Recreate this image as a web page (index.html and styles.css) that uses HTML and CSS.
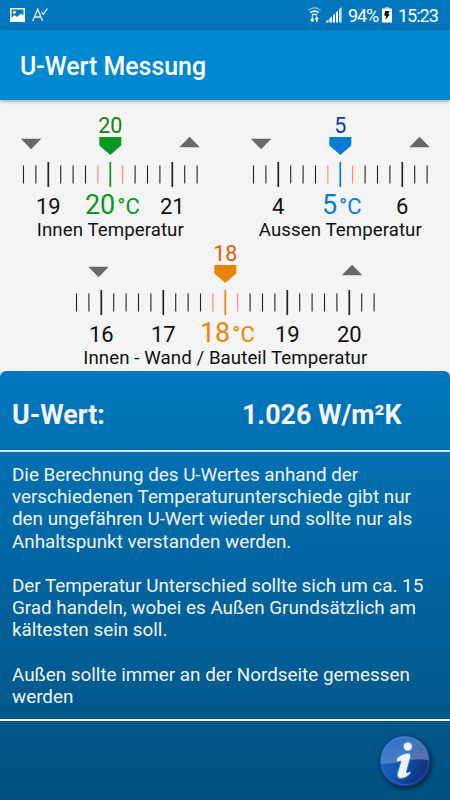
FILE: index.html
```html
<!DOCTYPE html>
<html lang="de">
<head>
    <meta charset="UTF-8">
    <meta name="viewport" content="width=device-width, initial-scale=1.0">
    <title>U-Wert Messung</title>
    <link rel="stylesheet" href="styles.css">
</head>
<body>
    <div class="statusbar">
        <svg class="icon-picture" width="15" height="14" viewBox="0 0 15 14">
            <path fill="#fff" fill-rule="evenodd" d="M0 0h15v14H0zM1.500 1.500v8.500l3-3 2.500 2 4-3.500 2.500 2V1.500z"/>
            <circle cx="4.300" cy="4.300" r="1.500" fill="#fff"/>
        </svg>
        <svg class="icon-spell" width="16" height="14" viewBox="0 0 16 14" fill="none" stroke="#e8f3fa" stroke-width="1.300">
            <path d="M.7 13L5.700 1.200 10.500 13M2.400 9h6.500M9.700 4.200l1.600 2.100L15.300.7"/>
        </svg>
        <div class="status-right">
            <svg width="13" height="16" viewBox="0 0 13 16" fill="none" stroke="#fff" stroke-width="1.400">
                <path d="M.5 3.500Q6.500-1.800 12.500 3.500" stroke="#7fb8dc"/>
                <path d="M2.200 5.800q4.300-3.500 8.600 0M4 8.200q2.500-2 5 0"/>
                <path d="M4.300 9.500v5M8.700 15v-5"/>
                <path fill="#fff" stroke="none" d="M2 12.200h4.600L4.300 15.300zM6.400 12.300H11L8.700 9.300z"/>
            </svg>
            <svg class="icon-signal" width="16" height="16" viewBox="0 0 16 16" fill="#fff">
                <path d="M0 15.500V14.500L2.500 12.500v3zM3.500 11.500L6 9.300v6.200H3.500zM7 8.300L9 6.500v9H7zM10 5.500l2-1.800v11.800h-2z"/>
                <path fill="#c5dff0" d="M13 2.300L15.700 0v15.500H13z"/>
            </svg>
            <span class="percent">94%</span>
            <svg class="icon-battery" width="10" height="16" viewBox="0 0 10 16">
                <path fill="#8fc1e0" d="M3 0h4v2H3z"/>
                <path fill="#fff" d="M0 1.500h10v14H0z"/>
                <path fill="#111" d="M3 4h4.500L6.300 7.300H8L3.300 13l.9-4.200H2.300z"/>
            </svg>
            <span class="clock">15:23</span>
        </div>
    </div>

    <header class="toolbar">
        <h1>U-Wert Messung</h1>
    </header>

    <main class="gauges">
        <div class="gauge-row">
            <svg class="gauge green" width="220" height="128" data-value="20" data-range="7" data-arrow="79" data-label="Innen Temperatur" data-label-width="147"></svg>
            <svg class="gauge blue" width="220" height="128" data-value="5" data-range="7" data-arrow="79" data-label="Aussen Temperatur" data-label-width="163"></svg>
        </div>
        <svg class="gauge orange" width="450" height="128" data-value="18" data-range="12" data-arrow="126.5" data-label="Innen - Wand / Bauteil Temperatur" data-label-width="284"></svg>
    </main>

    <section class="panel">
        <div class="result">
            <span class="result-name">U-Wert:</span>
            <span class="result-value">1.026 W/m²K</span>
        </div>
        <div class="info">
            <p>Die Berechnung des U-Wertes anhand der<br>verschiedenen Temperaturunterschiede gibt nur<br>den ungefähren U-Wert wieder und sollte nur als<br>Anhaltspunkt verstanden werden.</p>
            <p>Der Temperatur Unterschied sollte sich um ca. 15<br>Grad handeln, wobei es Außen Grundsätzlich am<br>kältesten sein soll.</p>
            <p>Außen sollte immer an der Nordseite gemessen<br>werden</p>
        </div>
        <footer class="footer">
            <svg class="info-button" width="56" height="56" viewBox="0 0 56 56">
                <defs>
                    <linearGradient id="ball" x1="0" y1=".2" x2="1" y2=".7">
                        <stop offset="0" stop-color="#1467cb"/>
                        <stop offset=".5" stop-color="#1554ac"/>
                        <stop offset="1" stop-color="#102a72"/>
                    </linearGradient>
                    <linearGradient id="gloss" x1="0" y1="0" x2="1" y2="1">
                        <stop offset="0" stop-color="#fff" stop-opacity=".08"/>
                        <stop offset="1" stop-color="#fff" stop-opacity=".32"/>
                    </linearGradient>
                </defs>
                <circle cx="28" cy="28" r="25.300" fill="url(#ball)" stroke="#123f86"/>
                <circle cx="28" cy="28" r="23.700" fill="none" stroke="#4b86cf" stroke-width=".7" opacity=".6"/>
                <path fill="url(#gloss)" d="M4.500 31A23.700 23.700 0 1 1 51.500 27Q38 25 27 28T4.500 31z"/>
                <g fill="#f4f4f4" stroke="#1c7ee8" stroke-width=".8">
                    <circle cx="30.800" cy="13.500" r="4.600"/>
                    <path d="M19.500 25.500Q25 20 31 20q3.500.3 2.500 4l-4 14.500q-.4 1.800 1 1.300l2-1.300q1.800.3.800 2.300-5 5.200-10 4.700-4-.8-2.900-5l3.600-12.500q-3 1.500-4.500.3z"/>
                </g>
            </svg>
        </footer>
    </section>

    <script src="script.js"></script>
</body>
</html>
```

FILE: styles.css
```css
body {
    margin: 0;
    width: 450px;
    height: 800px;
    overflow: hidden;
    display: flex;
    flex-direction: column;
    font-family: Roboto, sans-serif;
    background-color: #f4f4f4;
}
.statusbar {
    display: flex;
    align-items: center;
    height: 30px;
    padding: 0 11px 0 10px;
    box-sizing: border-box;
    background-color: #0277bd;
    color: #fff;
}
.icon-spell {
    margin-left: 7px;
}
.status-right {
    display: flex;
    align-items: center;
    margin-left: auto;
    font-size: 18px;
}
.icon-signal {
    margin: 0 6px 0 5px;
}
.percent {
    width: 31px;
    white-space: nowrap;
    letter-spacing: -1.1px;
}
.icon-battery {
    margin: 0 6px 0 3px;
}
.clock {
    width: 41px;
    white-space: nowrap;
    letter-spacing: -1px;
}
.toolbar {
    height: 70px;
    display: flex;
    align-items: center;
    padding-left: 20px;
    background-color: #0288d1;
    box-shadow: 0 1px 4px rgba(0, 0, 0, 0.4);
}
h1 {
    margin: 3px 0 0;
    font-size: 24.9px;
    font-weight: 500;
    color: #fff;
}

/* gauges */
.gauges {
    height: 271px;
    padding-top: 14px;
    box-sizing: border-box;
}
.gauge-row {
    display: flex;
    justify-content: space-between;
}
.gauge {
    display: block;
    fill: #111;
}
.gauge .arrow {
    fill: #686868;
}
.gauge .tick {
    fill: #222;
}
.gauge .tick.near {
    fill: #fa8072;
}
.gauge .accent {
    fill: var(--accent);
}
.gauge .top {
    fill: var(--top);
    font-size: 21.5px;
}
.gauge .number {
    font-size: 22px;
}
.gauge .current {
    font-size: 27px;
}
.gauge .label {
    font-size: 18.7px;
}
.green {
    --accent: #089820;
    --top: #108410;
}
.blue {
    --accent: #087bd8;
    --top: #0838b8;
}
.orange {
    --accent: #e98407;
    --top: #e25b08;
}

/* result panel */
.panel {
    flex: 1;
    display: flex;
    flex-direction: column;
    border-radius: 6px 6px 0 0;
    background: linear-gradient(#0277bd, #015080);
    color: #f4f4f4;
}
.result {
    display: flex;
    align-items: center;
    height: 81px;
    padding: 9px 12px 0;
    box-sizing: border-box;
    border-bottom: 2px solid #d8e2f4;
    font-size: 26.8px;
    font-weight: bold;
}
.result-name {
    width: 230px;
}
.info {
    height: 269px;
    padding: 12px 12px 0;
    box-sizing: border-box;
    border-bottom: 2px solid #f4f4f4;
    font-size: 18.83px;
    line-height: 22.2px;
    white-space: nowrap;
}
.info p {
    margin: 0 0 22.2px;
}
.footer {
    display: flex;
    justify-content: flex-end;
    padding: 12px 17px 0 0;
}
.info-button {
    filter: drop-shadow(1px 2px 2px rgba(0, 0, 0, 0.6));
}
```

FILE: script.js
```js
const STEP = 12.4;

function drawGauge(svg) {
    const { value, range, arrow, label, labelWidth } = svg.dataset;
    const cx = svg.getAttribute('width') / 2 + 0.3;
    const n = Number(value);
    const r = Number(range);
    const a = Number(arrow);

    let out = `<text class="top" x="${cx}" y="18.700" text-anchor="middle">${value}</text>`;
    out += `<path class="accent" d="M${cx - 11} 23h22v8.500l-11 9.500-11-9.500z"/>`;

    // step arrows
    out += `<path class="arrow" d="M${cx - a - 10.5} 24.700h20.500l-10.200 10.500z"/>`;
    out += `<path class="arrow" d="M${cx + a - 10} 33.200h20.500l-10.200-10.500z"/>`;

    for (let i = -r; i <= r; i++) {
        const x = cx + i * STEP;
        const major = i % 5 === 0;
        const w = major ? 1.7 : 1.1;
        const cls = i === 0 ? 'accent' : Math.abs(i) === 1 ? 'tick near' : 'tick';
        out += `<rect class="${cls}" x="${x - w / 2}" y="${major ? 48 : 51.5}" width="${w}" height="${major ? 25 : 18}"/>`;
        if (major && i !== 0) {
            out += `<text class="number" x="${x}" y="100" text-anchor="middle">${n + i / 5}</text>`;
        }
    }

    const numEnd = value.length > 1 ? cx + 5 : cx - 3.2;
    out += `<text class="accent current" x="${numEnd}" y="100" text-anchor="end">${value}</text>`;
    out += `<text class="accent number" x="${numEnd + 2}" y="100">°C</text>`;
    out += `<text class="label" x="${cx}" y="122" text-anchor="middle" textLength="${labelWidth}">${label}</text>`;
    svg.innerHTML = out;
}

document.querySelectorAll('.gauge').forEach(drawGauge);
```
